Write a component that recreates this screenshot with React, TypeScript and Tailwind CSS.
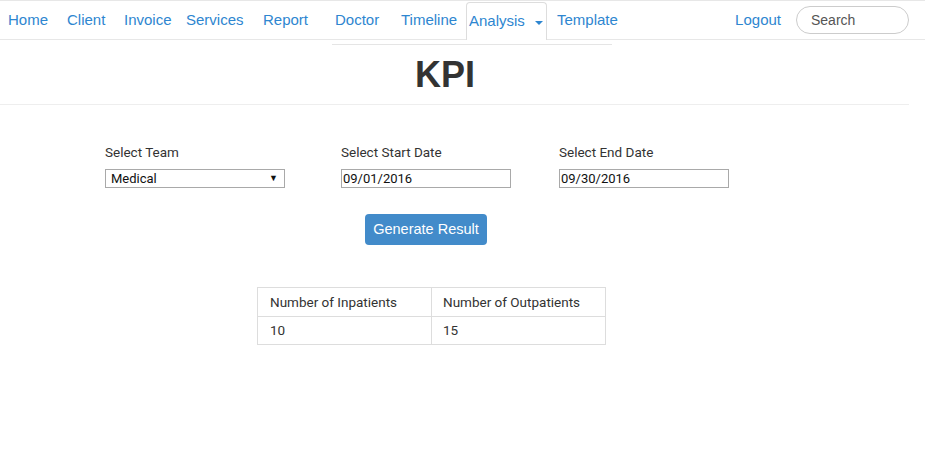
import React from "react";

const navItems = [
  { label: "Home", w: "w-[59px]" },
  { label: "Client", w: "w-[57px]" },
  { label: "Invoice", w: "w-[62px]" },
  { label: "Services", w: "w-[77px]" },
  { label: "Report", w: "w-[72px]" },
  { label: "Doctor", w: "w-[66px]" },
  { label: "Timeline", w: "w-[65px]" },
];

const App = () => {
  return (
    <div className="w-[925px] h-[451px] bg-white text-[#333] font-['Roboto',sans-serif] overflow-hidden">
      {/* top nav */}
      <nav className="h-[40px] border-t border-b border-[#e7e7e7] flex items-stretch font-['Liberation_Sans',Arial,sans-serif] text-[15px] text-[#2e86d0]">
        <ul className="flex items-stretch pl-[8px]">
          {navItems.map((item) => (
            <li key={item.label} className={`${item.w} flex items-center`}>
              {item.label}
            </li>
          ))}
          <li className="w-[81px] mt-[1px] -mb-[1px] flex items-center pl-[2px] gap-[10px] border border-b-0 border-[#ddd] rounded-t-[4px] bg-white">
            Analysis
            <span className="w-0 h-0 border-l-[4px] border-r-[4px] border-t-[4px] border-l-transparent border-r-transparent border-t-[#2e86d0] mt-[3px]" />
          </li>
          <li className="pl-[10px] flex items-center">Template</li>
        </ul>
        <div className="ml-auto flex items-center pr-[16px]">
          <span className="mr-[15px]">Logout</span>
          <div className="w-[113px] h-[28px] rounded-full border border-[#ccc] flex items-center pl-[14px] text-[14px] text-[#555]">
            Search
          </div>
        </div>
      </nav>

      <div className="ml-[332px] w-[280px] mt-[4px] border-t border-[#e5e5e5]" />

      <h1 className="w-[890px] text-center font-['Liberation_Sans',Arial,sans-serif] font-bold text-[36px] leading-[40px] mt-[10px] text-[#333]">
        KPI
      </h1>

      <div className="w-[909px] mt-[9px] border-t border-[#eee]" />

      {/* form */}
      <div className="flex pl-[105px] mt-[39px] text-[13.5px]">
        <div className="w-[236px]">
          <div className="leading-[16px]">Select Team</div>
          <div className="mt-[9px] w-[180px] h-[19px] border border-[#a9a9a9] flex items-center justify-between pl-[5px] pr-[6px] text-[13px] text-[#111]">
            <span>Medical</span>
            <span className="text-[9px]">▼</span>
          </div>
        </div>
        <div className="w-[218px]">
          <div className="leading-[16px]">Select Start Date</div>
          <div className="mt-[9px] w-[170px] h-[19px] border border-[#a9a9a9] flex items-center pl-[1px] text-[13px] text-[#111]">
            09/01/2016
          </div>
        </div>
        <div>
          <div className="leading-[16px]">Select End Date</div>
          <div className="mt-[9px] w-[170px] h-[19px] border border-[#a9a9a9] flex items-center pl-[1px] text-[13px] text-[#111]">
            09/30/2016
          </div>
        </div>
      </div>

      <button className="block ml-[365px] mt-[26px] w-[122px] h-[31px] rounded-[4px] bg-[#428bca] text-white font-['Liberation_Sans',Arial,sans-serif] text-[14.5px]">
        Generate Result
      </button>

      <table className="ml-[257px] mt-[42px] w-[349px] border-collapse text-[13.5px] text-[#333]">
        <tbody>
          <tr className="h-[29px]">
            <td className="w-[174px] border border-[#ddd] pl-[12px]">Number of Inpatients</td>
            <td className="border border-[#ddd] pl-[11px]">Number of Outpatients</td>
          </tr>
          <tr className="h-[28px]">
            <td className="border border-[#ddd] pl-[12px]">10</td>
            <td className="border border-[#ddd] pl-[11px]">15</td>
          </tr>
        </tbody>
      </table>
    </div>
  );
};

export default App;
